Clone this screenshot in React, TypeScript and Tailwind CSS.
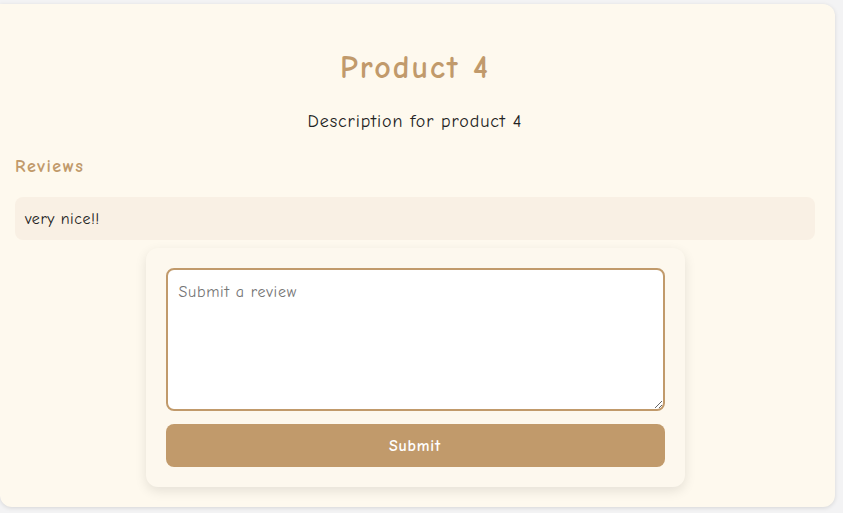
export default function App() {
  return (
    <div
      className="min-h-screen bg-[#f3f3f4] pt-1 pb-2"
      style={{ fontFamily: '"Comic Sans MS", "Comic Neue", "DejaVu Sans", sans-serif' }}
    >
      <div className="w-[835px] h-[503px] bg-[#fef9ee] rounded-r-xl rounded-bl-xl shadow-[0_1px_4px_rgba(0,0,0,0.12)] pl-[15px] pr-[20px]">
        <h1 className="pt-[40px] h-[88px] text-center text-[32px] leading-[48px] font-bold tracking-[2px] text-[#c19a6b]">
          Product 4
        </h1>
        <p className="mt-[16px] text-center text-[18px] leading-[27px] tracking-[0.9px] text-[#222]">
          Description for product 4
        </p>
        <h2 className="mt-[18px] text-[18px] leading-[27px] font-bold tracking-[1.5px] text-[#c19a6b]">
          Reviews
        </h2>
        <div className="mt-[17px] h-[43px] rounded-lg bg-[#f9f0e4] px-[10px] flex items-center text-[16px] tracking-[0.5px] text-[#222]">
          very nice!!
        </div>
        <form className="mt-2 mx-auto w-[539px] h-[239px] rounded-xl bg-[#fdf8ee] shadow-[0_4px_12px_rgba(0,0,0,0.1)] p-5 flex flex-col gap-[13px]">
          <textarea
            placeholder="Submit a review"
            className="w-full h-[143px] rounded-lg border-2 border-[#c19a6b] bg-white px-[11px] py-[10px] text-[16px] tracking-[0.7px] text-[#333] placeholder:text-[#757575] outline-none"
          />
          <button
            type="button"
            className="w-full h-[43px] rounded-lg bg-[#c19a6b] text-white text-[16px] font-bold tracking-[0.8px]"
          >
            Submit
          </button>
        </form>
      </div>
    </div>
  );
}
